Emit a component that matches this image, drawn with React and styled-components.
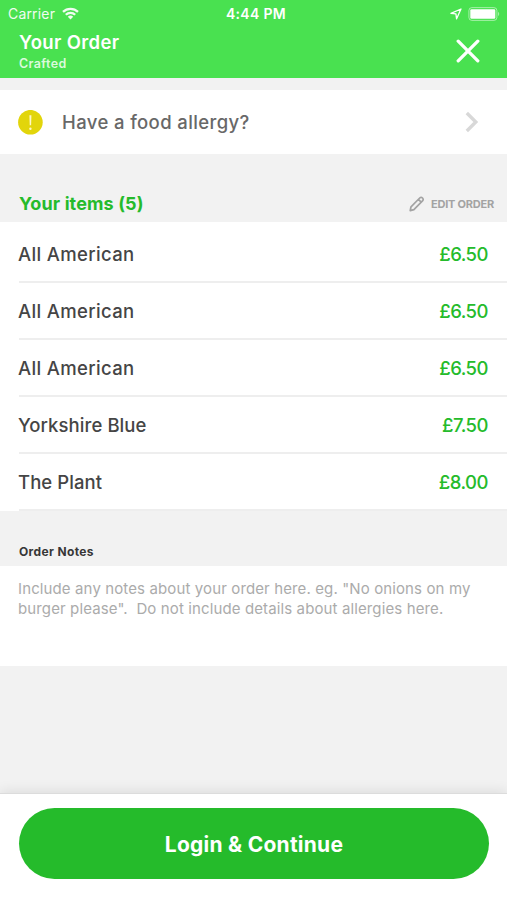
import React from "react";
import styled, { createGlobalStyle } from "styled-components";

const GlobalStyle = createGlobalStyle`
  *, *::before, *::after { box-sizing: border-box; }
  body { margin: 0; background: #f2f2f2; }
  button, textarea, h1, h2, p, ul { margin: 0; padding: 0; border: 0; background: none; font: inherit; }
  ul { list-style: none; }
`;

const Screen = styled.div`
  display: flex;
  flex-direction: column;
  width: 100%;
  height: 900px;
  overflow: hidden;
  background: #f2f2f2;
  font-family: Inter, "Open Sans", sans-serif;
`;

const Top = styled.header`
  height: 78px;
  flex: none;
  background: #49e150;
  color: #fff;
`;

const StatusBar = styled.div`
  display: grid;
  grid-template-columns: 1fr auto 1fr;
  align-items: center;
  height: 27px;
  padding: 0 7px 0 8px;
`;

const Carrier = styled.div`
  display: flex;
  align-items: center;
  gap: 7px;
  font-size: 14px;
  letter-spacing: 0.18px;
  opacity: 0.92;
`;

const Clock = styled.div`
  font-size: 14px;
  font-weight: 600;
  letter-spacing: 0.3px;
  padding-left: 4px;
`;

const StatusIcons = styled.div`
  display: flex;
  justify-content: flex-end;
  align-items: center;
  gap: 6px;
`;

const TitleBar = styled.div`
  display: flex;
  justify-content: space-between;
  padding: 4px 26px 0 19px;
`;

const Title = styled.h1`
  && {
    font-size: 18.5px;
    line-height: 23px;
    font-weight: 600;
    letter-spacing: 0.35px;
  }
`;

const Venue = styled.p`
  && {
    padding-top: 2px;
    font-size: 12.5px;
    line-height: 16px;
    font-weight: 600;
    letter-spacing: 0.35px;
    color: #dbfadc;
  }
`;

const CloseButton = styled.button`
  display: flex;
  align-items: center;
  height: 40px;
`;

const AllergyRow = styled.button`
  && {
    display: flex;
    align-items: center;
    flex: none;
    height: 64px;
    margin-top: 12px;
    padding: 0 28px 0 18px;
    background: #fff;
  }
`;

const AllergyLabel = styled.span`
  flex: 1;
  padding-left: 19px;
  text-align: left;
  font-size: 18.5px;
  font-weight: 500;
  letter-spacing: 0.38px;
  color: #686868;
`;

const ItemsHeader = styled.div`
  display: flex;
  align-items: center;
  justify-content: space-between;
  flex: none;
  height: 68px;
  padding: 32px 13px 0 19px;
`;

const ItemsTitle = styled.h2`
  && {
    margin-top: -2px;
    font-size: 18px;
    font-weight: 700;
    letter-spacing: 0.12px;
    color: #25bb2b;
  }
`;

const EditButton = styled.button`
  && {
    display: flex;
    align-items: center;
    gap: 6px;
    font-size: 11px;
    font-weight: 700;
    letter-spacing: -0.22px;
    color: #a3a3a3;
  }
`;

const ItemList = styled.ul`
  flex: none;
  && { padding: 4px 0 0 19px; background: #fff; }
`;

const ItemRow = styled.li`
  display: flex;
  align-items: center;
  justify-content: space-between;
  height: 57px;
  padding: 0 19px 0 0;
  border-bottom: 2px solid #eee;
  font-size: 18.5px;
  font-weight: 500;
`;

const ItemName = styled.span`
  margin-left: -1px;
  color: #454545;
  letter-spacing: ${({ $tracking }) => $tracking}px;
`;

const Price = styled.span`
  color: #25bb2b;
  letter-spacing: -0.5px;
`;

const NotesLabel = styled.label`
  display: block;
  flex: none;
  height: 55px;
  padding: 33px 19px 0;
  font-size: 12px;
  line-height: 16px;
  font-weight: 700;
  letter-spacing: 0.36px;
  color: #373737;
`;

const Notes = styled.textarea`
  && {
    display: block;
    flex: none;
    height: 100px;
    padding: 13px 18px;
    background: #fff;
    resize: none;
    outline: none;
    font-size: 15px;
    line-height: 20px;
    letter-spacing: 0.12px;
  }
  &::placeholder { color: #ababab; opacity: 1; }
`;

const Footer = styled.footer`
  flex: none;
  height: 107px;
  margin-top: auto;
  padding: 14px 18px 0 19px;
  background: #fff;
  border-top: 1px solid #dcdcdc;
  box-shadow: 0 -2px 12px rgba(0, 0, 0, 0.09);
`;

const ContinueButton = styled.button`
  && {
    width: 100%;
    height: 71px;
    padding-top: 1px;
    border-radius: 36px;
    background: #25bb2b;
    color: #fff;
    font-size: 21px;
    font-weight: 700;
    letter-spacing: 0.25px;
  }
`;

const Svg = styled.svg`
  display: block;
  flex: none;
`;

const WifiIcon = () => (
  <Svg width="17" height="13" viewBox="0 0 17 13" fill="#fff">
    <path d="M0.2 4.1a11.8 11.8 0 0 1 16.6 0l-1.6 1.7a9.5 9.5 0 0 0-13.4 0z" />
    <path d="M3 7a7.8 7.8 0 0 1 11 0l-1.6 1.6a5.5 5.5 0 0 0-7.8 0z" />
    <path d="M5.8 9.8a3.8 3.8 0 0 1 5.4 0L8.5 12.5z" />
  </Svg>
);

const LocationIcon = () => (
  <Svg width="12" height="12" viewBox="0 0 12 12" fill="none" stroke="#fff" strokeWidth="1.3" strokeLinejoin="round">
    <path d="M11 1 .9 5.3l5 .5.7 5z" />
  </Svg>
);

const BatteryIcon = () => (
  <Svg width="32" height="14" viewBox="0 0 32 14">
    <rect x="0.9" y="0.6" width="28" height="12.8" rx="3" fill="none" stroke="#fff" strokeOpacity=".5" />
    <rect x="2.3" y="2.2" width="25" height="9.6" rx="1.3" fill="#fff" />
    <path d="M30.2 4.8q2 2.2 0 4.4z" fill="#fff" fillOpacity=".6" />
  </Svg>
);

const CloseIcon = () => (
  <Svg width="26" height="24" viewBox="0 0 26 24" stroke="#fff" strokeWidth="3.3" strokeLinecap="round">
    <path d="m3.2 2.2 19.6 19.6M22.8 2.2 3.2 21.8" />
  </Svg>
);

const AlertIcon = () => (
  <Svg width="25" height="25" viewBox="0 0 25 25">
    <circle cx="12.4" cy="12.2" r="12.3" fill="#e2d50b" />
    <path d="M11.4 5.2h2l-.3 10h-1.4z" fill="#fff8c8" />
    <circle cx="12.4" cy="18.7" r="1.2" fill="#fff8c8" />
  </Svg>
);

const ChevronIcon = () => (
  <Svg width="14" height="22" viewBox="0 0 14 22" fill="none" stroke="#d8d8d8" strokeWidth="3.4">
    <path d="m1.8 2 9 9-9 9" />
  </Svg>
);

const PencilIcon = () => (
  <Svg width="16" height="16" viewBox="0 0 16 16" fill="none" stroke="#a3a3a3" strokeWidth="1.7" strokeLinejoin="round">
    <path d="M1.2 14.6 2 10.8 10.7 2q1.4-1.4 2.8 0t0 2.8L4.9 13.6zM9.4 3.4l2.8 2.8" />
  </Svg>
);

const items = [
  { name: "All American", price: "£6.50", tracking: 0.35 },
  { name: "All American", price: "£6.50", tracking: 0.35 },
  { name: "All American", price: "£6.50", tracking: 0.35 },
  { name: "Yorkshire Blue", price: "£7.50", tracking: 0.08 },
  { name: "The Plant", price: "£8.00", tracking: 0.08 },
];

export default function App() {
  return (
    <>
      <GlobalStyle />
      <Screen>
        <Top>
          <StatusBar>
            <Carrier>Carrier <WifiIcon /></Carrier>
            <Clock>4:44 PM</Clock>
            <StatusIcons><LocationIcon /><BatteryIcon /></StatusIcons>
          </StatusBar>
          <TitleBar>
            <div>
              <Title>Your Order</Title>
              <Venue>Crafted</Venue>
            </div>
            <CloseButton aria-label="Close"><CloseIcon /></CloseButton>
          </TitleBar>
        </Top>
        <AllergyRow>
          <AlertIcon />
          <AllergyLabel>Have a food allergy?</AllergyLabel>
          <ChevronIcon />
        </AllergyRow>
        <ItemsHeader>
          <ItemsTitle>Your items (5)</ItemsTitle>
          <EditButton><PencilIcon />EDIT ORDER</EditButton>
        </ItemsHeader>
        <ItemList>
          {items.map((item, i) => (
            <ItemRow key={i}>
              <ItemName $tracking={item.tracking}>{item.name}</ItemName>
              <Price>{item.price}</Price>
            </ItemRow>
          ))}
        </ItemList>
        <NotesLabel htmlFor="notes">Order Notes</NotesLabel>
        <Notes
          id="notes"
          placeholder={'Include any notes about your order here. eg. "No onions on my\nburger please".  Do not include details about allergies here.'}
        />
        <Footer>
          <ContinueButton>Login &amp; Continue</ContinueButton>
        </Footer>
      </Screen>
    </>
  );
}
